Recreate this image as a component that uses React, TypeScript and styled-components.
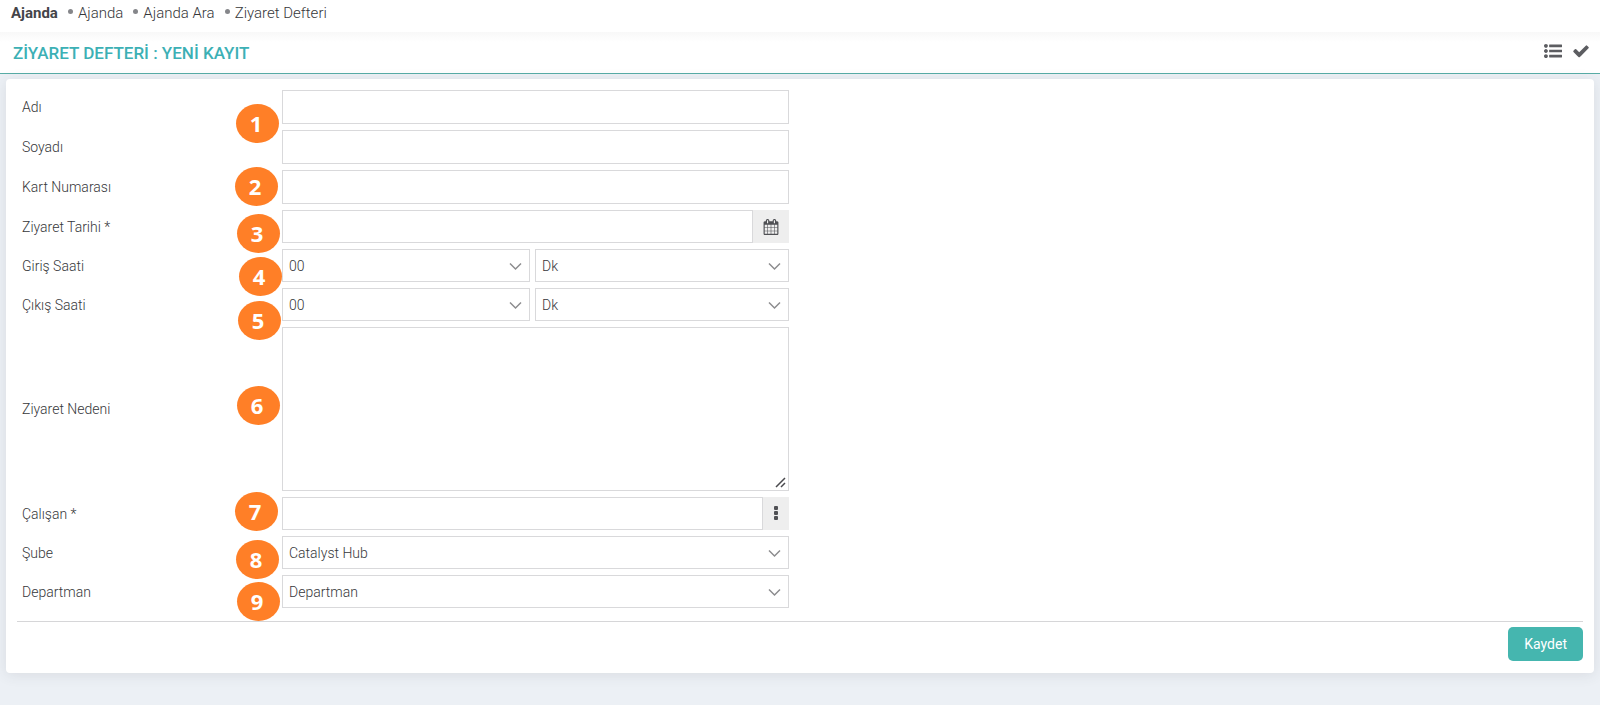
import React from "react";
import styled, { createGlobalStyle } from "styled-components";

const GlobalStyle = createGlobalStyle`
  *, *::before, *::after { box-sizing: border-box; }
  html { min-height: 100%; background: #ecf0f5; }
  body {
    margin: 0;
    color: #36373a;
    font: 300 14px/20px Roboto, "Liberation Sans", sans-serif;
  }
`;

const Breadcrumbs = styled.nav`
  display: flex;
  align-items: center;
  height: 32px;
  padding: 0 11px 6px;
  background: #fff;
  font-size: 15px;
`;

const CrumbRoot = styled.a`
  color: #444549;
  font-weight: 700;
  text-decoration: none;
`;

const Crumb = styled.a`
  display: flex;
  align-items: center;
  gap: 5px;
  margin-left: 10px;
  color: #36373a;
  text-decoration: none;

  &::before {
    content: "";
    width: 5px;
    height: 5px;
    margin-bottom: 3px;
    border-radius: 50%;
    background: #85868a;
  }
`;

const TitleBar = styled.header`
  display: flex;
  align-items: center;
  justify-content: space-between;
  height: 42px;
  padding: 0 11px 0 13px;
  border-bottom: 1px solid #58ada6;
  background: linear-gradient(#f8f8f8, #fff 10px);
`;

const Title = styled.h1`
  margin: 0;
  color: #3cb0b5;
  font-size: 17px;
  font-weight: 500;
  line-height: 20px;
`;

const Tools = styled.div`
  display: flex;
  gap: 11px;
  padding-bottom: 4px;
`;

const ToolButton = styled.button`
  display: flex;
  padding: 0;
  border: 0;
  background: none;
  color: #5c5d61;
  cursor: pointer;
`;

const Card = styled.form`
  position: relative;
  margin: 5px 6px 32px;
  padding: 11px 11px 12px;
  border-radius: 4px;
  background: #fff;
  box-shadow: 0 2px 14px rgba(60, 65, 70, 0.11);
`;

const Fields = styled.div`
  display: flex;
  flex-direction: column;
  gap: 6px;
  width: 50%;
  padding: 0 11px 13px 5px;
`;

const Row = styled.div`
  display: grid;
  grid-template-columns: 260px minmax(0, 1fr);
  align-items: center;
`;

const Control = styled.div<{ $split?: boolean }>`
  display: grid;
  grid-template-columns: ${(p) => (p.$split ? "248fr 254fr" : "1fr")};
  gap: 5px;
`;

const TextInput = styled.input`
  width: 100%;
  height: 34px;
  padding: 0 6px;
  border: 1px solid #d9d9db;
  border-radius: 0;
  background: #fff;
  color: inherit;
  font: inherit;
`;

const InputGroup = styled.div`
  display: flex;
  height: 33px;

  ${TextInput} {
    flex: 1;
    min-width: 0;
    height: 100%;
  }
`;

const Addon = styled.button<{ $width: number }>`
  display: flex;
  align-items: center;
  justify-content: center;
  width: ${(p) => p.$width}px;
  padding: 0;
  border: 0;
  background: #eee;
  color: #4f5054;
  cursor: pointer;
`;

const SelectBox = styled.div`
  position: relative;
`;

const Select = styled.select`
  display: block;
  width: 100%;
  height: 33px;
  padding: 0 30px 0 6px;
  border: 1px solid #d9d9db;
  border-radius: 0;
  appearance: none;
  background: #fff;
  color: inherit;
  font: inherit;
`;

const Chevron = styled.svg`
  position: absolute;
  top: 13px;
  right: 8px;
  pointer-events: none;
`;

const TextAreaBox = styled.div`
  position: relative;
`;

const TextArea = styled.textarea`
  display: block;
  width: 100%;
  height: 164px;
  padding: 6px;
  border: 1px solid #d9d9db;
  resize: none;
  color: inherit;
  font: inherit;
`;

const Grip = styled.svg`
  position: absolute;
  right: 3px;
  bottom: 3px;
  pointer-events: none;
`;

const Footer = styled.footer`
  display: flex;
  justify-content: flex-end;
  padding-top: 5px;
  border-top: 1px solid #d6d6d8;
`;

const SaveButton = styled.button`
  height: 34px;
  padding: 0 16px;
  border: 0;
  border-radius: 5px;
  background: #45b6af;
  color: #fff;
  font: 400 14px/20px Roboto, "Liberation Sans", sans-serif;
  cursor: pointer;
`;

const Marker = styled.span<{ $x: number; $y: number }>`
  position: absolute;
  left: ${(p) => p.$x}px;
  top: ${(p) => p.$y}px;
  display: flex;
  align-items: center;
  justify-content: center;
  width: 43px;
  height: 39px;
  padding: 0 3px 1px 0;
  border-radius: 50%;
  background: #ff7f27;
  color: #fff;
  font: 700 22px/30px "Open Sans", "Noto Sans", sans-serif;
  pointer-events: none;
`;

/* Numbered callouts pinned on the form, relative to the card. */
const markers = [
  { x: 230, y: 25 },
  { x: 229, y: 88 },
  { x: 231, y: 135 },
  { x: 233, y: 178 },
  { x: 232, y: 222 },
  { x: 231, y: 307 },
  { x: 229, y: 413 },
  { x: 230, y: 461 },
  { x: 231, y: 503 },
];

function Dropdown({ id, label, value }: { id: string; label?: string; value: string }) {
  return (
    <SelectBox>
      <Select id={id} aria-label={label} defaultValue={value}>
        <option>{value}</option>
      </Select>
      <Chevron width="13" height="9" viewBox="0 0 13 9" fill="none" stroke="#8c8c8e" strokeWidth="1.5">
        <path d="M1 1.5 6.5 7 12 1.5" />
      </Chevron>
    </SelectBox>
  );
}

function Field({ id, label, split, children }: { id: string; label: string; split?: boolean; children: React.ReactNode }) {
  return (
    <Row>
      <label htmlFor={id}>{label}</label>
      <Control $split={split}>{children}</Control>
    </Row>
  );
}

export default function App() {
  return (
    <>
      <GlobalStyle />
      <Breadcrumbs aria-label="Ajanda">
        <CrumbRoot href="#">Ajanda</CrumbRoot>
        <Crumb href="#">Ajanda</Crumb>
        <Crumb href="#">Ajanda Ara</Crumb>
        <Crumb href="#">Ziyaret Defteri</Crumb>
      </Breadcrumbs>
      <TitleBar>
        <Title>ZİYARET DEFTERİ : YENİ KAYIT</Title>
        <Tools>
          <ToolButton type="button" aria-label="Liste">
            <svg width="18" height="18" viewBox="0 0 1792 1792" fill="currentColor">
              <path d="M384 1408q0 80-56 136t-136 56-136-56-56-136 56-136 136-56 136 56 56 136zm0-512q0 80-56 136t-136 56-136-56-56-136 56-136 136-56 136 56 56 136zm1408 416v192q0 13-9.5 22.5t-22.5 9.5h-1216q-13 0-22.5-9.5t-9.5-22.5v-192q0-13 9.5-22.5t22.5-9.5h1216q13 0 22.5 9.5t9.5 22.5zm-1408-928q0 80-56 136t-136 56-136-56-56-136 56-136 136-56 136 56 56 136zm1408 416v192q0 13-9.5 22.5t-22.5 9.5h-1216q-13 0-22.5-9.5t-9.5-22.5v-192q0-13 9.5-22.5t22.5-9.5h1216q13 0 22.5 9.5t9.5 22.5zm0-512v192q0 13-9.5 22.5t-22.5 9.5h-1216q-13 0-22.5-9.5t-9.5-22.5v-192q0-13 9.5-22.5t22.5-9.5h1216q13 0 22.5 9.5t9.5 22.5z" />
            </svg>
          </ToolButton>
          <ToolButton type="button" aria-label="Onayla">
            <svg width="16" height="18" viewBox="100 0 1592 1792" fill="currentColor">
              <path d="M1671 566q0 40-28 68l-724 724-136 136q-28 28-68 28t-68-28l-136-136-362-362q-28-28-28-68t28-68l136-136q28-28 68-28t68 28l294 295 656-657q28-28 68-28t68 28l136 136q28 28 28 68z" />
            </svg>
          </ToolButton>
        </Tools>
      </TitleBar>
      <Card>
        <Fields>
          <Field id="adi" label="Adı">
            <TextInput id="adi" />
          </Field>
          <Field id="soyadi" label="Soyadı">
            <TextInput id="soyadi" />
          </Field>
          <Field id="kart" label="Kart Numarası">
            <TextInput id="kart" />
          </Field>
          <Field id="tarih" label="Ziyaret Tarihi *">
            <InputGroup>
              <TextInput id="tarih" />
              <Addon type="button" $width={36} aria-label="Takvim">
                <svg width="16" height="16" viewBox="0 0 1792 1792" fill="currentColor">
                  <path d="M192 1664h288v-288h-288v288zm352 0h320v-288h-320v288zm-352-352h288v-320h-288v320zm352 0h320v-320h-320v320zm-352-384h288v-288h-288v288zm736 736h320v-288h-320v288zm-384-736h320v-288h-320v288zm768 736h288v-288h-288v288zm-384-352h320v-320h-320v320zm-352-864v-288q0-13-9.5-22.5t-22.5-9.5h-64q-13 0-22.5 9.5t-9.5 22.5v288q0 13 9.5 22.5t22.5 9.5h64q13 0 22.5-9.5t9.5-22.5zm736 864h288v-320h-288v320zm-384-384h320v-288h-320v288zm384 0h288v-288h-288v288zm32-480v-288q0-13-9.5-22.5t-22.5-9.5h-64q-13 0-22.5 9.5t-9.5 22.5v288q0 13 9.5 22.5t22.5 9.5h64q13 0 22.5-9.5t9.5-22.5zm384-64v1280q0 52-38 90t-90 38h-1408q-52 0-90-38t-38-90v-1280q0-52 38-90t90-38h128v-96q0-66 47-113t113-47h64q66 0 113 47t47 113v96h384v-96q0-66 47-113t113-47h64q66 0 113 47t47 113v96h128q52 0 90 38t38 90z" />
                </svg>
              </Addon>
            </InputGroup>
          </Field>
          <Field id="giris" label="Giriş Saati" split>
            <Dropdown id="giris" value="00" />
            <Dropdown id="giris-dk" label="Giriş dakikası" value="Dk" />
          </Field>
          <Field id="cikis" label="Çıkış Saati" split>
            <Dropdown id="cikis" value="00" />
            <Dropdown id="cikis-dk" label="Çıkış dakikası" value="Dk" />
          </Field>
          <Field id="neden" label="Ziyaret Nedeni">
            <TextAreaBox>
              <TextArea id="neden" />
              <Grip width="11" height="11" viewBox="0 0 11 11" stroke="#4a4a4e" strokeWidth="1.5">
                <path d="M1 10 10 1M6 10 10 6" />
              </Grip>
            </TextAreaBox>
          </Field>
          <Field id="calisan" label="Çalışan *">
            <InputGroup>
              <TextInput id="calisan" />
              <Addon type="button" $width={26} aria-label="Çalışan seç">
                <svg width="4" height="18" viewBox="0 0 4 18" fill="currentColor">
                  <rect y="1" width="4" height="4" rx="1" />
                  <rect y="6" width="4" height="4" rx="1" />
                  <rect y="11" width="4" height="4" rx="1" />
                </svg>
              </Addon>
            </InputGroup>
          </Field>
          <Field id="sube" label="Şube">
            <Dropdown id="sube" value="Catalyst Hub" />
          </Field>
          <Field id="departman" label="Departman">
            <Dropdown id="departman" value="Departman" />
          </Field>
        </Fields>
        <Footer>
          <SaveButton type="submit">Kaydet</SaveButton>
        </Footer>
        {markers.map((m, i) => (
          <Marker key={i} $x={m.x} $y={m.y}>
            {i + 1}
          </Marker>
        ))}
      </Card>
    </>
  );
}
